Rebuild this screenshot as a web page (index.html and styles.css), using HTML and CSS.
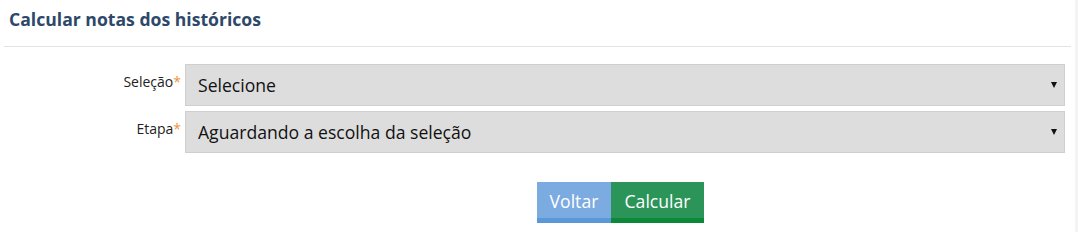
FILE: index.html
```html
<!DOCTYPE html>
<html lang="pt-BR">
<head>
    <meta charset="UTF-8">
    <meta name="viewport" content="width=device-width, initial-scale=1.0">
    <title>Calcular notas dos históricos</title>
    <link rel="stylesheet" href="styles.css">
</head>
<body>
    <div class="page">
        <div class="panel">
            <div class="panel-header">
                <h1>Calcular notas dos históricos</h1>
            </div>

            <form class="form">
                <label class="form-label" for="selecao">Seleção<span class="required">*</span></label>
                <div class="select-wrap">
                    <select id="selecao" class="form-select">
                        <option>Selecione</option>
                    </select>
                </div>

                <label class="form-label" for="etapa">Etapa<span class="required">*</span></label>
                <div class="select-wrap">
                    <select id="etapa" class="form-select">
                        <option>Aguardando a escolha da seleção</option>
                    </select>
                </div>

                <div class="form-actions">
                    <button type="button" class="btn btn-back">Voltar</button>
                    <button type="submit" class="btn btn-submit">Calcular</button>
                </div>
            </form>
        </div>
        <div class="side-edge"></div>
    </div>
</body>
</html>
```

FILE: styles.css
```css
body {
    font-family: 'Open Sans', 'Liberation Sans', sans-serif;
    background: #fff;
    color: #222;
    margin: 0;
}

.page {
    display: flex;
    height: 232px;
}

.panel {
    width: 1067px;
    margin-left: 4px;
}

.side-edge {
    width: 3px;
    margin-left: 4px;
    background: #f4f4f4;
}

.panel-header {
    height: 46px;
    border-bottom: 1px solid #e3e3e3;
    padding-left: 5px;
    display: flex;
    align-items: center;
}

h1 {
    margin: 0 0 8px 0;
    font-size: 17.6px;
    font-weight: bold;
    color: #2d4869;
}

.form {
    display: grid;
    grid-template-columns: 177px 880px;
    column-gap: 4px;
    row-gap: 5px;
    margin-top: 17px;
}

.form-label {
    text-align: right;
    font-size: 14px;
    color: #222;
    padding-top: 8px;
}

.required {
    color: #f0923a;
}

.select-wrap {
    position: relative;
}

.select-wrap::after {
    content: '';
    position: absolute;
    right: 8px;
    top: 18px;
    border-left: 3px solid transparent;
    border-right: 3px solid transparent;
    border-top: 6px solid #111;
}

.form-select {
    -webkit-appearance: none;
    appearance: none;
    width: 100%;
    height: 42px;
    border: 1px solid #cfcfcf;
    background: #dddddd;
    font-family: 'Open Sans', 'Liberation Sans', sans-serif;
    font-size: 17.6px;
    color: #111;
    padding: 0 12px;
    border-radius: 0;
    outline: none;
}

.form-actions {
    grid-column: 2;
    display: flex;
    justify-content: center;
    padding-right: 9px;
    margin-top: 24px;
}

.btn {
    height: 41px;
    border: 0;
    font-family: 'Open Sans', 'Liberation Sans', sans-serif;
    font-size: 17.6px;
    color: #fff;
    padding: 0 0 3px 0;
    border-radius: 0;
    cursor: pointer;
}

.btn-back {
    width: 74px;
    background: #7babe1;
    box-shadow: inset 0 -5px 0 #5b98d8;
}

.btn-submit {
    width: 93px;
    background: #2b9559;
    box-shadow: inset 0 -5px 0 #0b8939;
}
```
